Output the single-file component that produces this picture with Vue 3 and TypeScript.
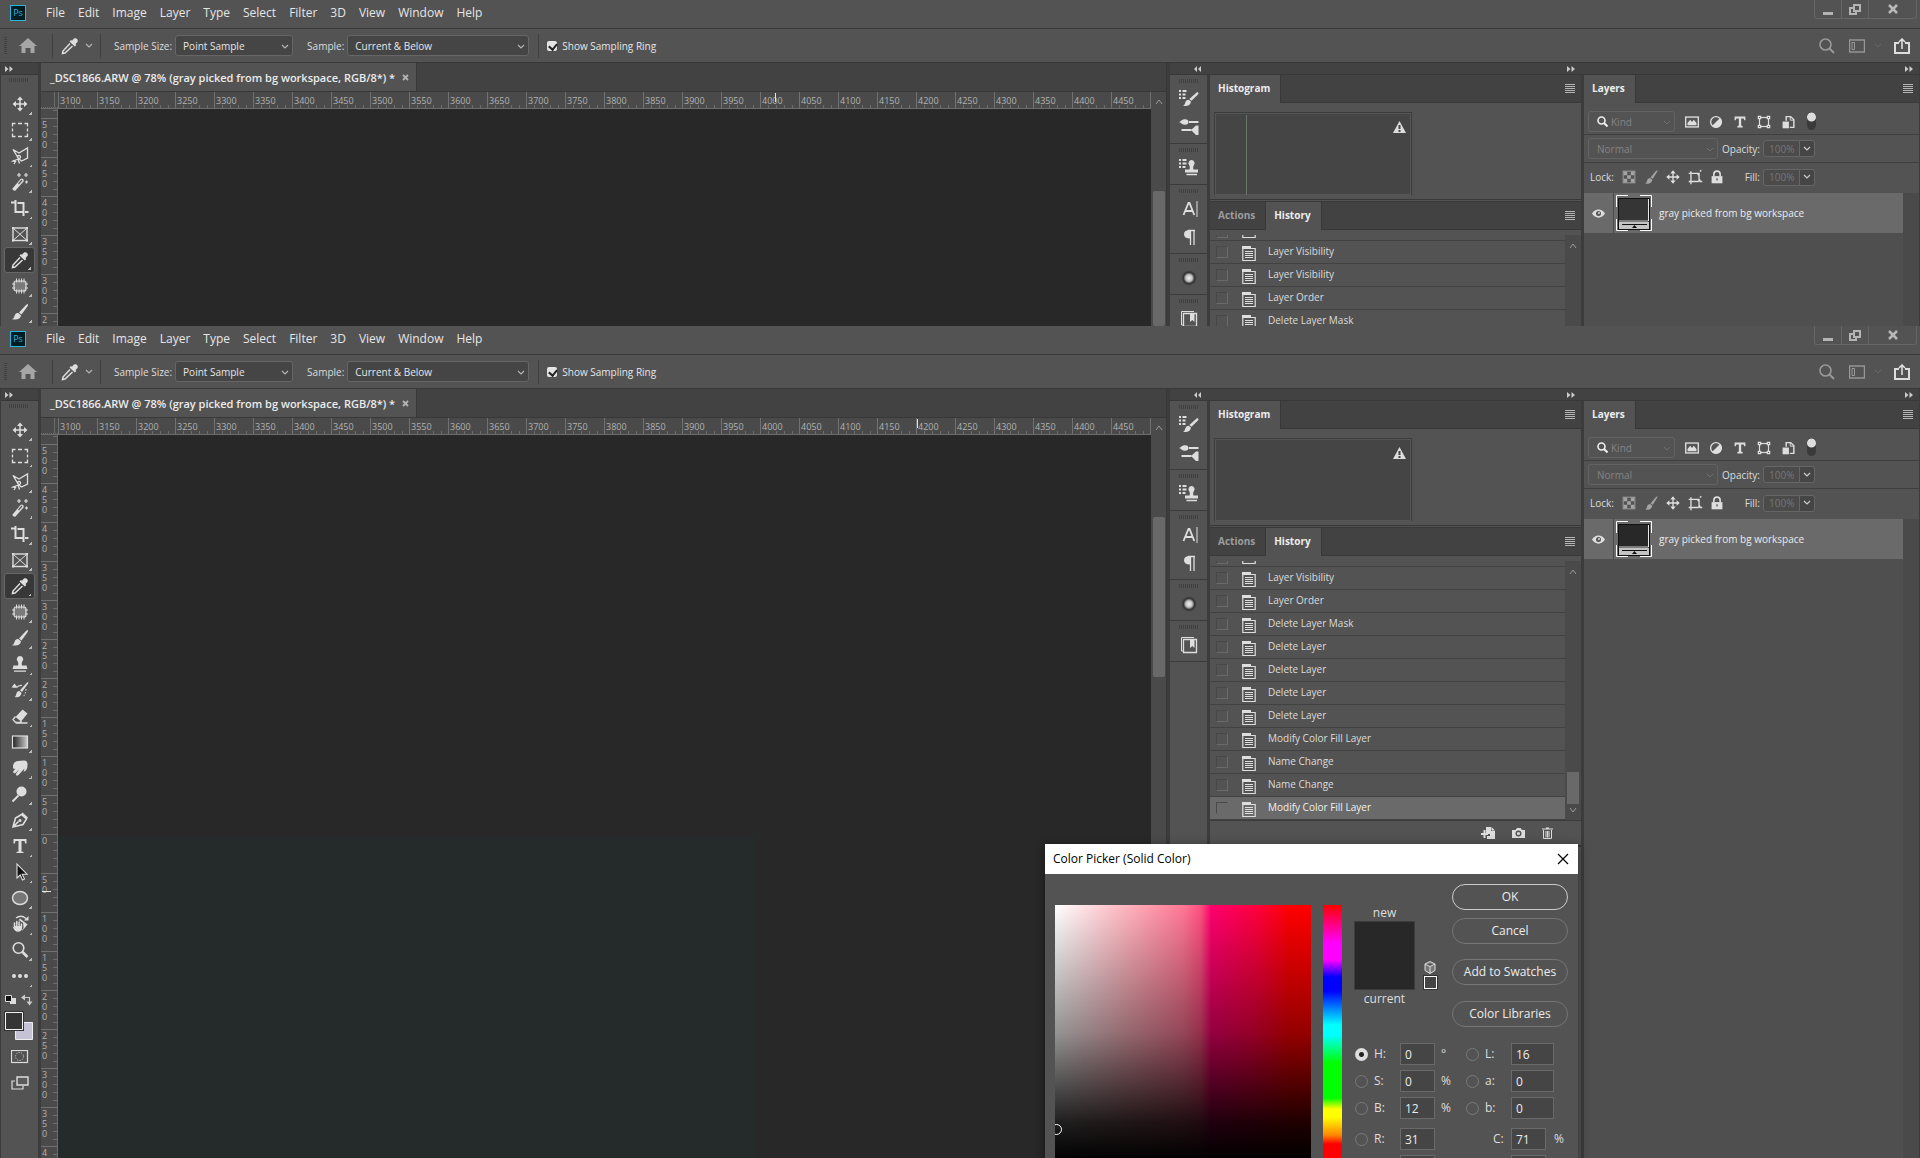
<script setup lang="ts">
import { reactive } from 'vue'

interface Shot {
  id: string
  history: string[]
  selected: number
  thumb: string
  histogramLine: boolean
  markerX: number
  markerY: number
  toolCount: number
  rulerCount: number
  full: boolean
}

const shots: Shot[] = [
  {
    id: 'a',
    history: ['Layer Visibility', 'Layer Visibility', 'Layer Order', 'Delete Layer Mask'],
    selected: -1,
    thumb: '#353535',
    histogramLine: true,
    markerX: 734,
    markerY: 0,
    toolCount: 9,
    rulerCount: 6,
    full: false
  },
  {
    id: 'b',
    history: [
      'Layer Visibility', 'Layer Order', 'Delete Layer Mask', 'Delete Layer', 'Delete Layer', 'Delete Layer',
      'Delete Layer', 'Modify Color Fill Layer', 'Name Change', 'Name Change', 'Modify Color Fill Layer'
    ],
    selected: 10,
    thumb: '#282828',
    histogramLine: false,
    markerX: 876,
    markerY: 456,
    toolCount: 22,
    rulerCount: 19,
    full: true
  }
]

const menus = ['File', 'Edit', 'Image', 'Layer', 'Type', 'Select', 'Filter', '3D', 'View', 'Window', 'Help']
const across = Array.from({ length: 28 }, (_, i) => String(3100 + i * 50))
const down = Array.from({ length: 19 }, (_, i) => String(Math.abs(500 - i * 50)))

const tools = [
  'move', 'marquee', 'lasso', 'wand', 'crop', 'frame', 'dropper', 'patch', 'brush', 'stamp', 'historyBrush',
  'eraser', 'gradient', 'smudge', 'dodge', 'pen', 'type', 'select', 'ellipse', 'rotate', 'zoom', 'dots'
]
const strips = [['brushList', 'brushSettings'], ['stampList'], ['character', 'paragraph'], ['sphere'], ['library']]
const filters = ['fImage', 'fAdjust', 'fType', 'fShape', 'fSmart']
const locks = ['lCheck', 'lBrush', 'move', 'lArtboard', 'lLock']

const icons: Record<string, string> = {
  move: '<path d="M10 4v12M4 10h12" stroke="currentColor" stroke-width="1.5"/><path d="M10 2.500l3 3.500H7zM10 17.500l3-3.500H7zM2.500 10l3.500-3v6zM17.500 10l-3.500-3v6z" fill="currentColor"/>',
  marquee: '<path d="M2.500 6.500v-3h3M8 3.500h4M14.500 3.500h3v3M17.500 8.500v3M17.500 13.500v3h-3M12 16.500H8M5.500 16.500h-3v-3M2.500 11.500v-3" fill="none" stroke="currentColor" stroke-width="1.300"/>',
  lasso: '<path d="M3 3.500l6 3.500 8.500-5v10l-6 3-3-2.500L3 3.500zM8.500 13l-5.500 2 2.500 .500-1.500 2.500M8 13l1.500 4.500M9 12.500a1.500 1.500 0 1 1 .1 0" fill="none" stroke="currentColor" stroke-width="1.300"/>',
  wand: '<path d="M2.500 16.500l8-9.500a2 2 0 0 1 3 2.500l-8 9a2.100 2.100 0 0 1-3-2z" fill="currentColor"/><path d="M8.500 12l3.500-4" stroke="#535353" stroke-width="1.200"/><path d="M9 1v4M7 3h4M16 1v4M14 3h4M16.500 8.500v3M15 10h3" stroke="currentColor" stroke-width="1.200"/>',
  crop: '<path d="M1 4.500h3.500M5.500 2v12h7.500M7.500 5h6v13M15 14h3.500" fill="none" stroke="currentColor" stroke-width="2"/>',
  frame: '<rect x="3" y="4" width="14" height="12.500" fill="none" stroke="currentColor" stroke-width="1.400"/><path d="M3 4l14 12.500M17 4L3 16.500" stroke="currentColor"/><path d="M2 3h2v2H2zM16 3h2v2h-2zM2 15.500h2v2H2zM16 15.500h2v2h-2z" fill="currentColor"/>',
  dropper: '<path d="M13 3.500c2-3 6-.500 4.500 2.500l-2 2 .8 1-1.500 1.500-5.300-5L11 4l1 .800z" fill="currentColor"/><path d="M10 7.500l-7 7.500-.500 2.500 2.500-.500 7.500-7" fill="none" stroke="currentColor" stroke-width="1.500"/>',
  patch: '<rect x="4" y="5" width="12" height="10" rx="2" fill="#7a7a7a" stroke="currentColor" stroke-width="1.200"/><path d="M6.500 2.500v4M9 2.500v4M11.500 2.500v4M14 2.500v4M6.500 13.500v4M9 13.500v4M11.500 13.500v4M14 13.500v4M2 8h3M2 12h3M15 8h3M15 12h3" stroke="currentColor"/>',
  brush: '<path d="M17.500 2c1 .5.500 1.500-.500 3l-5.500 7.500-2.500-2 6-6.500c1-1 1.800-2 2.500-2z" fill="currentColor"/><path d="M8.300 11l2.700 2.200c-.5 4-4 4.800-9 4 2.500-1 2-2.700 3-4.500.7-1.300 2-1.900 3.300-1.700z" fill="currentColor"/>',
  stamp: '<path d="M10 2a3.200 3.200 0 0 1 2.500 5.200c-.8 1-1 2.500-.5 4.300h4.500l1 3.500H2.500l1-3.500H8c.5-1.800.3-3.300-.500-4.300A3.200 3.200 0 0 1 10 2zM4 16.500h12v1.300H4z" fill="currentColor"/>',
  historyBrush: '<path d="M18 2c.8.600 0 2-1 3l-5 7-2-1.700 5.500-6c1-1 1.800-2.300 2.500-2.300zM9.300 11l2.300 2c-.5 3.500-3.500 4.800-7 4 1.700-1 1.300-2.300 2-4 .5-1.300 1.600-2 2.700-2z" fill="currentColor"/><path d="M3 7h4c3-2 4-1.500 5-1.500" fill="none" stroke="currentColor" stroke-width="1.200"/><path d="M1.500 7.500l3-4 3 4z" fill="currentColor"/><path d="M16 9c0 4-1.500 6-3 8" fill="none" stroke="currentColor" stroke-dasharray="1.500 1.500"/>',
  eraser: '<path d="M12.500 3.500l5 4-6.500 8-5.500-4.500z" fill="currentColor"/><path d="M5.500 10.500L3 13.500l2.500 3h4.500l1.500-1.500M6 17h11.500" fill="none" stroke="currentColor" stroke-width="1.300"/>',
  gradient: '<rect x="2.500" y="4" width="15" height="12" fill="url(#grad)" stroke="currentColor" stroke-width="1.200"/>',
  smudge: '<path d="M3 9c0-4 2-5.500 5-6l6-.500c3 0 3.500 2 3.500 4.500 0 4-1.500 6-4 7l1-3.500-6 6.500c-2 1.500-3.500 0-2-2l3-4-4 4c-1.500 1-3-.500-2-2l2-2.500C3.500 11.500 3 10.500 3 9z" fill="currentColor"/>',
  dodge: '<circle cx="11.500" cy="7.500" r="5" fill="currentColor"/><path d="M8.500 11.500l-6 6" stroke="currentColor" stroke-width="2"/>',
  pen: '<path d="M3 17l2.500-9 6-3.500 5 4.500-3.500 5.500L3 17zM12 3l5.500 5M3.500 16.500l5-5" fill="none" stroke="currentColor" stroke-width="1.600"/><circle cx="10" cy="10.500" r="1.500" fill="currentColor"/>',
  type: '<path d="M3.500 3h13v4.500h-1.300l-.7-2.500h-3v10.500l2 .500V17h-7v-1l2-.500V5h-3l-.7 2.500H3.500z" fill="currentColor"/>',
  select: '<path d="M7 2v14l3.200-3 2.300 5 2-1-2.300-4.800H17z" fill="#111" stroke="currentColor" stroke-width="1.100"/>',
  ellipse: '<ellipse cx="10" cy="10" rx="7.500" ry="6.500" fill="#777" stroke="currentColor" stroke-width="1.400"/>',
  rotate: '<path d="M10 4.500l7.500 6-5 6-6-7z" fill="currentColor"/><path d="M6 4c4-3 7-2 10 .500" fill="none" stroke="currentColor" stroke-width="1.300"/><path d="M18.500 2v4.500H14z" fill="currentColor"/><path d="M5 12V8.500M7.200 11V7M9.500 11V8M11.700 12V9.500M3 12l2 4M12 14V12" stroke="#535353" stroke-width="3" stroke-linecap="round"/><path d="M4.500 12.500V9M6.800 11.500V7.500M9.100 11.500V8M11.400 13v-3" stroke="currentColor" stroke-width="1.500" stroke-linecap="round"/><path d="M2.500 12.500l2 1V12h7.600v2c0 2-2 3.800-4 3.800-2.600 0-4-2-5.600-5.300z" fill="currentColor"/>',
  zoom: '<circle cx="8.500" cy="8" r="5.300" fill="none" stroke="currentColor" stroke-width="1.600"/><path d="M12.500 12l5 5" stroke="currentColor" stroke-width="2.600"/>',
  dots: '<circle cx="4" cy="10" r="2" fill="currentColor"/><circle cx="10" cy="10" r="2" fill="currentColor"/><circle cx="16" cy="10" r="2" fill="currentColor"/>',
  brushList: '<path d="M0 1h2v2H0zM3.500 1h4v2h-4zM0 4.500h2v2H0zM3.500 4.500h3v2h-3zM0 8h2v2H0zM3.500 8h3v2h-3z" fill="currentColor"/><path d="M19 3.500c1 .6.500 1.300-.3 2.200l-6.200 6-2.200-1.800 6.200-5.500c1-.8 1.900-1.300 2.500-.900zM9.700 10.800l2.200 1.700c-.5 4-3.500 5-8 4.500 2-1 1.800-2.200 2.600-4 .6-1.300 1.800-2.200 3.200-2.200z" fill="currentColor"/>',
  brushSettings: '<path d="M0 5c2-.3 2.500-2.800 6-2.800 2.500 0 3.500 1.300 3.500 2.800S8.500 7.800 6 7.800C3 7.800 2.500 6 0 5z" fill="currentColor"/><path d="M10 5h9.500M2.500 13h10" stroke="currentColor" stroke-width="2"/><path d="M12 13l5-4.500h2.500v9.500H17z" fill="currentColor"/>',
  stampList: '<path d="M0 1h2v2H0zM3.500 1h4v2h-4zM0 4.500h2v2H0zM3.500 4.500h4v2h-4zM0 8h2v2H0zM3.500 8h3v2h-3z" fill="currentColor"/><path d="M12.500 2a3.200 3.200 0 0 1 2.300 5.300c-.8 1-.8 3-.3 4.200H19v3H6v-3h4.500c.5-1.200.5-3.200-.3-4.200A3.200 3.200 0 0 1 12.500 2zM7.500 15.700h10.500v1.500H7.500z" fill="currentColor"/>',
  character: '<path d="M4.500 16L9.500 4h1l4.800 12M6.300 12h7" fill="none" stroke="currentColor" stroke-width="1.800"/><path d="M18 2v16" stroke="currentColor"/>',
  paragraph: '<path d="M11 3v8.500C7 11.500 5 10 5 7.200S7 3 11 3z" fill="currentColor"/><path d="M9 3.500h7M11.500 3v15M15 3v15" stroke="currentColor" stroke-width="1.300"/>',
  sphere: '<circle cx="10" cy="10" r="8" fill="url(#ball)"/>',
  library: '<path d="M5 16H2.500V2.500H15" fill="none" stroke="currentColor"/><path d="M4.500 4.500h13v13h-13z" fill="none" stroke="currentColor" stroke-width="1.300"/><path d="M11 4.500h4.500V13l-2.200-2-2.300 2z" fill="currentColor"/>',
  doc: '<path d="M0 0h9v3H0z" fill="currentColor"/><path d="M.800 2.500h12.400v12H.800z" fill="none" stroke="currentColor" stroke-width="1.200"/><path d="M3 5.500h8M3 7.500h8M3 9.500h8M3 11.500h8" stroke="currentColor"/>',
  fImage: '<rect x="3" y="4.500" width="14" height="11" fill="none" stroke="currentColor" stroke-width="1.500"/><path d="M5 13.500V11l3-3.500 2 2.500 2-2.500 3 3.500v2.500z" fill="currentColor"/>',
  fAdjust: '<circle cx="10" cy="10" r="6" fill="none" stroke="currentColor" stroke-width="1.500"/><path d="M14.500 5.500L5.500 14.500A6.200 6.200 0 0 0 14.500 5.500z" fill="currentColor"/>',
  fType: '<path d="M4 4h12v4h-1.300L14 6h-2.700v8l1.700.700V16H7v-1.300L8.700 14V6H6l-.7 2H4z" fill="currentColor"/>',
  fShape: '<rect x="5" y="5" width="10" height="10" fill="none" stroke="currentColor" stroke-width="1.300"/><path d="M3 3h4v4H3zM13 3h4v4h-4zM3 13h4v4H3zM13 13h4v4h-4z" fill="currentColor"/><path d="M4.500 4.500h1v1h-1zM14.500 4.500h1v1h-1zM4.500 14.500h1v1h-1zM14.500 14.500h1v1h-1z" fill="#535353"/>',
  fSmart: '<path d="M8 8.500V4h5l3.500 3.500V16H12" fill="none" stroke="currentColor" stroke-width="1.600"/><path d="M12.500 4v4h4" fill="none" stroke="currentColor"/><path d="M4 9.500h7V17H4z" fill="currentColor"/>',
  lCheck: '<rect x="3.500" y="3.500" width="13" height="13" fill="none" stroke="#a4a4a4"/><path d="M4 4h4v4H4zM12 4h4v4h-4zM8 8h4v4H8zM4 12h4v4H4zM12 12h4v4h-4z" fill="#a4a4a4"/>',
  lBrush: '<path d="M17.500 3l-5.500 9-2.500-1.500 5.500-6.500c1-1 2-1.500 2.500-1zM9 11l2.500 2c-1 4-4 5-8 4.500 2-1 1.500-2.500 2.500-4.500.5-1.200 1.800-2 3-2z" fill="#a4a4a4"/>',
  lArtboard: '<path d="M3 6h11.500v9M5.500 3.500V15h8l2.500-2M8 6h4.500l2.500 3M5.500 15v3M15 15h3M15.500 4l1.500-1.500M3 15h2" fill="none" stroke="currentColor" stroke-width="1.500"/>',
  lLock: '<path d="M4 9h12v8H4z" fill="currentColor"/><path d="M6.500 9V7a3.500 3.500 0 0 1 7 0v2" fill="none" stroke="currentColor" stroke-width="1.800"/><path d="M9.300 11.500h1.400v2.500H9.300z" fill="#535353"/>'
}

const picker = reactive({
  mode: 'H',
  rows: [
    { l: 'H', v: '0', u: '°', r: 'L', rv: '16', ru: '', radio: true },
    { l: 'S', v: '0', u: '%', r: 'a', rv: '0', ru: '', radio: true },
    { l: 'B', v: '12', u: '%', r: 'b', rv: '0', ru: '', radio: true },
    { l: 'R', v: '31', u: '', r: 'C', rv: '71', ru: '%', radio: false }
  ]
})
</script>

<template>
  <main class="stack">
    <svg class="defs" width="0" height="0" aria-hidden="true">
      <defs>
        <linearGradient id="grad"><stop offset="0" stop-color="#222" /><stop offset="1" stop-color="#ccc" /></linearGradient>
        <radialGradient id="ball">
          <stop offset="0" stop-color="#eee" /><stop offset=".4" stop-color="#c4c4c4" />
          <stop offset=".7" stop-color="#333" /><stop offset="1" stop-color="#535353" />
        </radialGradient>
      </defs>
    </svg>

    <section v-for="w in shots" :key="w.id" class="win">
      <header class="menubar">
        <span class="ps">Ps</span>
        <nav class="menus"><button v-for="m in menus" :key="m">{{ m }}</button></nav>
        <div class="controls">
          <button aria-label="Minimize"><svg width="10" height="14"><path d="M0 11.500h10" stroke="#b4b4b4" stroke-width="3" /></svg></button>
          <button aria-label="Restore"><svg width="12" height="14"><path d="M5 3h6v6H5zM4 6H1v6h6v-3" fill="none" stroke="#b4b4b4" stroke-width="2" /></svg></button>
          <button aria-label="Close" class="wide"><svg width="10" height="14"><path d="M1 3l8 8M9 3l-8 8" stroke="#b8b8b8" stroke-width="2.500" /></svg></button>
        </div>
      </header>

      <div class="options">
        <i class="vgrip"></i>
        <svg class="home" width="18" height="16"><path d="M9 0l9 8h-2.500v7h-4v-5h-5v5h-4V8H0z" fill="#a6a6a6" /></svg>
        <i class="sep"></i>
        <svg class="drop" width="20" height="20" viewBox="0 0 20 20" v-html="icons.dropper"></svg>
        <svg width="8" height="6"><path d="M1 1l3 3 3-3" fill="none" stroke="#b4b4b4" stroke-width="1.200" /></svg>
        <i class="sep two"></i>
        <label :for="'size' + w.id">Sample Size:</label>
        <span class="pick size">
          <select :id="'size' + w.id"><option>Point Sample</option></select>
          <svg width="8" height="6"><path d="M1 1l3 3 3-3" fill="none" stroke="#b4b4b4" stroke-width="1.200" /></svg>
        </span>
        <label :for="'from' + w.id" class="from">Sample:</label>
        <span class="pick below">
          <select :id="'from' + w.id"><option>Current &amp; Below</option></select>
          <svg width="8" height="6"><path d="M1 1l3 3 3-3" fill="none" stroke="#b4b4b4" stroke-width="1.200" /></svg>
        </span>
        <i class="sep three"></i>
        <label class="ring"><input type="checkbox" checked />Show Sampling Ring</label>
        <div class="right">
          <svg width="16" height="16"><circle cx="6.500" cy="6.500" r="5.500" fill="none" stroke="#999" stroke-width="1.600" /><path d="M10.500 10.500l4.500 4.500" stroke="#999" stroke-width="2" /></svg>
          <svg width="16" height="14"><rect x=".5" y="1" width="15" height="12" fill="none" stroke="#999" stroke-width="1.400" /><path d="M3 3.500h2.500v7H3z" fill="none" stroke="#999" /></svg>
          <svg width="8" height="6"><path d="M1 1l3 3 3-3" fill="none" stroke="#686868" /></svg>
          <svg width="16" height="16"><path d="M5 5H1v10h14V5h-4" fill="none" stroke="#ddd" stroke-width="2" /><path d="M8 11V2M5 4l3-3 3 3" fill="none" stroke="#ddd" stroke-width="1.600" /></svg>
        </div>
      </div>

      <div class="body">
        <aside class="tools">
          <div class="head"><svg width="8" height="6"><path d="M0 0l3.500 3L0 6zM4.500 0L8 3 4.500 6z" fill="#ccc" /></svg></div>
          <i class="grip"></i>
          <button v-for="t in tools.slice(0, w.toolCount)" :key="t" class="tool" :class="{ on: t === 'dropper' }" :aria-label="t">
            <svg width="20" height="20" viewBox="0 0 20 20" v-html="icons[t]"></svg>
            <i class="corner"></i>
          </button>
          <template v-if="w.full">
            <svg class="swatches" width="36" height="58">
              <path d="M10 8h6v6h-6z" fill="#ddd" /><path d="M5.500 5.500h6v6h-6z" fill="#111" stroke="#ddd" />
              <path d="M24 7.500h5.500V12" fill="none" stroke="#ccc" stroke-width="1.200" /><path d="M21 7.500l4-3v6zM29.500 15.500l-3-4h6z" fill="#ccc" />
              <path d="M15.500 32.500h17v17h-17z" fill="#c6c2d6" stroke="#eee" />
              <path d="M4 21h20v20H4z" fill="#333" /><path d="M5.500 22.500h17v17h-17z" fill="#353535" stroke="#f2f2f2" />
            </svg>
            <div class="modes">
              <svg width="18" height="14"><rect x=".5" y=".5" width="16" height="12" fill="none" stroke="#ddd" stroke-width="1.200" /><circle cx="8.500" cy="6.500" r="4" fill="none" stroke="#ddd" stroke-dasharray="1 1.500" /></svg>
              <svg width="18" height="14"><path d="M4 5H1v8h11v-3" fill="none" stroke="#ddd" stroke-width="1.200" /><path d="M6 1h11v8H6z" fill="#5a5a5a" stroke="#ddd" stroke-width="1.400" /></svg>
            </div>
          </template>
        </aside>

        <div class="doc">
          <div class="tabs">
            <div class="tab">
              <span>_DSC1866.ARW @ 78% (gray picked from bg workspace, RGB/8*) *</span>
              <svg width="7" height="7"><path d="M1 1l5 5M6 1L1 6" stroke="#b4b4b4" stroke-width="1.800" /></svg>
            </div>
          </div>
          <div class="view">
            <div class="mid">
              <div class="hruler">
                <i class="origin"></i>
                <span v-for="n in across" :key="n">{{ n }}</span>
                <i class="tail"></i>
                <i class="hmark" :style="{ left: w.markerX + 'px' }"></i>
              </div>
              <div class="plane">
                <div class="vruler">
                  <b></b>
                  <span v-for="(n, i) in down.slice(0, w.rulerCount)" :key="i"><em v-for="(c, j) in n.split('')" :key="j">{{ c }}</em></span>
                  <i v-if="w.markerY" class="vmark" :style="{ top: w.markerY + 'px' }"></i>
                </div>
                <div class="canvas"><div class="photo"></div></div>
              </div>
            </div>
            <div class="vscroll">
              <svg width="8" height="6"><path d="M1 5l3-4 3 4" fill="none" stroke="#999" /></svg>
              <i></i>
            </div>
          </div>
        </div>

        <div class="dock">
          <div class="head dockhead">
            <span class="h1"><svg width="7" height="6"><path d="M3 0L0 3l3 3zM7 0L4 3l3 3z" fill="#ccc" /></svg></span>
            <span class="h2"><svg width="8" height="6"><path d="M0 0l3.500 3L0 6zM4.500 0L8 3 4.500 6z" fill="#ccc" /></svg></span>
            <span class="h3"><svg width="8" height="6"><path d="M0 0l3.500 3L0 6zM4.500 0L8 3 4.500 6z" fill="#ccc" /></svg></span>
          </div>
          <div class="cols">
            <div class="strip">
              <div v-for="(g, i) in strips" :key="i" class="group">
                <i class="grip"></i>
                <button v-for="n in g" :key="n" :aria-label="n"><svg width="20" height="20" viewBox="0 0 20 20" v-html="icons[n]"></svg></button>
              </div>
            </div>

            <div class="panels">
              <div class="ptabs"><b class="active">Histogram</b><i class="burger"></i></div>
              <div class="histo">
                <div class="chart">
                  <i v-if="w.histogramLine"></i>
                  <svg width="13" height="12"><path d="M6.500 0L13 12H0z" fill="#ddd" /><path d="M5.500 4h2v4h-2zM5.500 9h2v2h-2z" fill="#444" /></svg>
                </div>
              </div>
              <div class="ptabs second"><b>Actions</b><b class="active mid-tab">History</b><i class="burger"></i></div>
              <div class="history">
                <div class="rows">
                  <div class="row cut"><i class="box"></i><svg class="ic" width="14" height="15" viewBox="0 0 14 15" v-html="icons.doc"></svg></div>
                  <div v-for="(h, i) in w.history" :key="i" class="row" :class="{ sel: i === w.selected }">
                    <i class="box"></i>
                    <svg class="ic" width="14" height="15" viewBox="0 0 14 15" v-html="icons.doc"></svg>
                    <span>{{ h }}</span>
                  </div>
                </div>
                <div class="hscroll">
                  <svg width="8" height="6"><path d="M1 5l3-4 3 4" fill="none" stroke="#999" /></svg>
                  <template v-if="w.full">
                    <i></i>
                    <svg width="8" height="6"><path d="M1 1l3 4 3-4" fill="none" stroke="#999" /></svg>
                  </template>
                </div>
              </div>
              <template v-if="w.full">
                <div class="foot">
                  <svg width="14" height="12"><path d="M5 0h5v4h4v8H6V9h3V7H5z" fill="#ddd" /><path d="M10.500 0l3.500 3.500h-3.500z" fill="#ddd" /><path d="M3.500 3v8M0 7h7" stroke="#ddd" stroke-width="2" /></svg>
                  <svg width="13" height="10"><path d="M0 2h3.500L5 0h3.500L10 2h3v8H0z" fill="#ddd" /><circle cx="6.500" cy="5.500" r="2.300" fill="none" stroke="#535353" stroke-width="1.400" /></svg>
                  <svg width="11" height="12"><path d="M0 2h11M4 1h3" stroke="#ddd" stroke-width="1.200" /><path d="M1.500 3v8.500h8V3M4 4v6.500M5.500 4v6.500M7 4v6.500" fill="none" stroke="#ddd" /></svg>
                </div>
                <div class="rest"></div>
              </template>
            </div>

            <div class="layers">
              <div class="ptabs"><b class="active">Layers</b><i class="burger far"></i></div>
              <div class="lrow kind">
                <span class="field kindbox">
                  <svg width="11" height="11"><circle cx="4.500" cy="4.500" r="3.500" fill="none" stroke="#eee" stroke-width="1.600" /><path d="M7 7l3.500 3.500" stroke="#eee" stroke-width="2" /></svg>
                  <select aria-label="Filter type"><option>Kind</option></select>
                  <svg class="chev" width="8" height="6"><path d="M1 1l3 3 3-3" fill="none" stroke="#707070" /></svg>
                </span>
                <span class="fset"><svg v-for="f in filters" :key="f" width="18" height="18" viewBox="0 0 20 20" v-html="icons[f]"></svg></span>
                <i class="toggle"></i>
              </div>
              <div class="lrow">
                <span class="field blend">
                  <select aria-label="Blend mode"><option>Normal</option></select>
                  <svg class="chev" width="8" height="6"><path d="M1 1l3 3 3-3" fill="none" stroke="#707070" /></svg>
                </span>
                <label class="amount"><span>Opacity:</span><input value="100%" /><i><svg width="8" height="6"><path d="M1 1l3 3 3-3" fill="none" stroke="#ccc" stroke-width="1.200" /></svg></i></label>
              </div>
              <div class="lrow last">
                <span class="lock">Lock:</span>
                <span class="lset"><svg v-for="f in locks" :key="f" width="18" height="18" viewBox="0 0 20 20" v-html="icons[f]"></svg></span>
                <label class="amount"><span>Fill:</span><input value="100%" /><i><svg width="8" height="6"><path d="M1 1l3 3 3-3" fill="none" stroke="#ccc" stroke-width="1.200" /></svg></i></label>
              </div>
              <div class="list">
                <div class="items">
                  <div class="layer">
                    <span class="eye"><svg width="13" height="9"><path d="M0 4.500C3-1 10-1 13 4.500 10 10 3 10 0 4.500z" fill="#ddd" /><circle cx="6.500" cy="4.500" r="2.500" fill="#555" /><circle cx="7" cy="4" r="1" fill="#ddd" /></svg></span>
                    <svg class="lthumb" width="36" height="36">
                      <path d="M.500 12V.500H12M24 .500h11.500V12M35.500 24v11.500H24M12 35.500H.500V24" fill="none" stroke="#fff" />
                      <path d="M2 3h32v32H2z" fill="#111" /><path d="M3 4h30v21H3z" :fill="w.thumb" />
                      <path d="M32.500 4v22H3" fill="none" stroke="#e8e8e8" />
                      <path d="M3 27h30v7H3z" fill="#c4c4c4" /><path d="M6 29.500h25" stroke="#111" /><path d="M16 33h5l-2.500-3z" fill="#111" />
                    </svg>
                    <span>gray picked from bg workspace</span>
                  </div>
                </div>
                <div class="lscroll"></div>
              </div>
            </div>
          </div>
        </div>
      </div>

      <div v-if="w.full" class="dialog" role="dialog" aria-label="Color Picker">
        <div class="dtitle">
          <span>Color Picker (Solid Color)</span>
          <button aria-label="Close dialog"><svg width="12" height="12"><path d="M1 1l10 10M11 1L1 11" stroke="#000" stroke-width="1.200" /></svg></button>
        </div>
        <div class="dbody">
          <div class="field2d"><i class="spot"></i></div>
          <div class="hue"></div>
          <div class="side">
            <div class="upper">
              <div class="compare"><span>new</span><i></i><span>current</span></div>
              <div class="web">
                <svg width="12" height="13"><path d="M6 .500l5 2.500v6.500L6 12.500 1 9.500V3zM1 3l5 2.500L11 3M6 5.500v7" fill="#777" stroke="#ddd" /></svg>
                <i></i>
              </div>
              <div class="btns">
                <button class="ok">OK</button>
                <button>Cancel</button>
                <button class="gap">Add to Swatches</button>
                <button class="gap2">Color Libraries</button>
              </div>
            </div>
            <div class="values">
              <div v-for="r in picker.rows" :key="r.l" class="vrow" :class="{ split: r.l === 'R' }">
                <label class="vl"><input v-model="picker.mode" type="radio" name="channel" :value="r.l" />{{ r.l }}:</label>
                <input v-model="r.v" class="num" :aria-label="r.l" />
                <span class="unit">{{ r.u }}</span>
                <label v-if="r.radio" class="vl rt"><input v-model="picker.mode" type="radio" name="channel" :value="r.r" />{{ r.r }}:</label>
                <span v-else class="vl rt cmyk">{{ r.r }}:</span>
                <input v-model="r.rv" class="num" :class="{ big: r.radio }" :aria-label="r.r" />
                <span class="unit">{{ r.ru }}</span>
              </div>
              <div class="vrow below-edge">
                <span class="vl"></span><i class="num"></i><span class="unit"></span><span class="vl rt"></span><i class="num"></i>
              </div>
            </div>
          </div>
        </div>
      </div>
    </section>
  </main>
</template>

<style>
html, body { margin: 0; background: #535353; }
</style>

<style scoped>
* { box-sizing: border-box; }
svg { display: block; flex: none; }
i, em { font-style: normal; }
button { border: 0; padding: 0; background: none; color: inherit; font: inherit; display: flex; align-items: center; justify-content: center; }
input, select { font: inherit; color: inherit; margin: 0; }
select { appearance: none; border: 0; background: none; padding: 0; outline: 0; }
.defs { position: absolute; }
.stack { height: 100vh; display: grid; grid-template-rows: 326px 1fr; overflow: hidden; font: 10px/14px "Open Sans", "Noto Sans", sans-serif; color: #dcdcdc; }
.win { position: relative; overflow: hidden; min-height: 0; display: flex; flex-direction: column; background: #535353; }

.menubar { flex: none; height: 28px; display: flex; align-items: flex-start; padding-left: 10px; }
.ps { width: 16px; height: 16px; margin-top: 5px; border: 1px solid #2fb4da; background: #001d26; color: #2fb4da; font-size: 9px; line-height: 13px; text-align: center; }
.menus { display: flex; gap: 13px; margin-left: 20px; height: 26px; font-size: 12px; color: #e6e6e6; }
.controls { margin: 0 3px 0 auto; display: flex; height: 19px; border: 1px solid #666; border-top: 0; border-radius: 0 0 3px 3px; }
.controls button { width: 27px; border-right: 1px solid #666; }
.controls .wide { width: 47px; border: 0; }

.options { flex: none; height: 34px; border-top: 1px solid #383838; display: flex; align-items: center; padding-left: 4px; }
.vgrip { width: 3px; height: 18px; background: repeating-linear-gradient(#404040 0 1px, transparent 1px 2px); }
.home { margin-left: 12px; }
.sep { width: 1px; height: 24px; margin-left: 15px; background: #3f3f3f; }
.drop { margin: 0 5px 0 7px; color: #ddd; }
.sep.two { margin-left: 7px; margin-right: 13px; }
.pick { position: relative; height: 21px; margin-left: 3px; border: 1px solid #666; border-radius: 3px; background: #454545; display: flex; color: #e6e6e6; }
.pick select { width: 100%; padding-left: 7px; }
.pick svg { position: absolute; right: 3px; top: 8px; }
.size { width: 118px; }
.below { width: 182px; }
.from { margin-left: 14px; }
.sep.three { margin: 0 8px 0 9px; }
.ring { display: flex; align-items: center; gap: 5px; color: #e6e6e6; }
.ring input { appearance: none; position: relative; width: 10px; height: 10px; background: #e4e4e4; border-radius: 2px; }
.ring input::after { content: ""; position: absolute; left: 3px; top: 1px; width: 4px; height: 6px; border: solid #222; border-width: 0 2px 2px 0; transform: rotate(40deg); }
.right { margin: 0 10px 0 auto; display: flex; align-items: center; gap: 14px; }
.right svg:nth-child(3) { margin-left: -5px; margin-right: -2px; }

.body { flex: 1; min-height: 0; display: flex; border-top: 1px solid #383838; }
.head { height: 12px; flex: none; background: #424242; border-bottom: 1px solid #383838; display: flex; align-items: center; }
.grip { display: block; height: 4px; width: 20px; background: repeating-linear-gradient(to right, #404040 0 1px, transparent 1px 2px); }

.tools { flex: none; width: 41px; border-left: 1px solid #3c3c3c; border-right: 3px solid #3c3c3c; display: flex; flex-direction: column; overflow: hidden; }
.tools .head { padding-left: 4px; }
.tools > .grip { margin: 3px 0 9px 8px; flex: none; }
.tool { position: relative; flex: none; width: 31px; height: 26px; margin-left: 3px; border-radius: 3px; color: #dedede; }
.tool.on { background: #383838; border: 1px solid #666; }
.corner { position: absolute; right: 3px; bottom: 2px; width: 3px; height: 3px; background: linear-gradient(135deg, transparent 50%, #bbb 50%); }
.swatches { margin: 1px 0 0 -1px; }
.modes { display: flex; flex-direction: column; gap: 12px; margin: 2px 0 0 10px; }

.doc { flex: 1; min-width: 0; display: flex; flex-direction: column; border-right: 1px solid #383838; }
.tabs { flex: none; height: 29px; background: #424242; border-bottom: 1px solid #383838; display: flex; }
.tab { display: flex; align-items: center; gap: 7px; padding: 1px 7px 0 9px; background: #535353; border-right: 1px solid #383838; font-size: 11px; font-weight: 600; color: #ececec; white-space: nowrap; }
.view { flex: 1; min-height: 0; display: flex; }
.mid { flex: 1; min-width: 0; display: flex; flex-direction: column; }
.hruler, .vruler { position: relative; flex: none; overflow: hidden; display: flex; background: #4a4a4a; color: #b2b2b2; font-size: 9px; }
.hruler { height: 17px; border-bottom: 1px solid #6c6c6c; }
.origin { flex: none; width: 17px; background: linear-gradient(#6c6c6c, #6c6c6c) 13px 0 / 1px 100% no-repeat; border-bottom: 1px dotted #6c6c6c; }
.hruler span { flex: none; width: 39px; padding-left: 1px; line-height: 17px; border-left: 1px solid #717171; background: repeating-linear-gradient(to right, transparent 0 7px, #6c6c6c 7px 8px) left bottom / 100% 3px no-repeat; }
.tail { width: 1px; background: #717171; }
.hmark { position: absolute; top: 1px; width: 1px; height: 9px; background: #e4e4e4; }
.plane { flex: 1; min-height: 0; display: flex; }
.vruler { flex-direction: column; width: 17px; border-right: 1px solid #6c6c6c; }
.vruler b { flex: none; height: 9px; background: linear-gradient(#6c6c6c, #6c6c6c) right 1px / 4px 1px no-repeat; }
.vruler span { flex: none; height: 39px; padding: 1px 0 0 1px; border-top: 1px solid #717171; background: repeating-linear-gradient(transparent 0 7px, #6c6c6c 7px 8px) right top / 4px 100% no-repeat; }
.vruler em { display: block; line-height: 10px; }
.vmark { position: absolute; left: 1px; width: 9px; height: 1px; background: #e4e4e4; }
.canvas { flex: 1; background: #282828; overflow: hidden; }
.photo { margin-top: 401px; height: 500px; width: 64%; background: linear-gradient(to right, #252b2b 99%, #282828); }
.vscroll { flex: none; width: 15px; background: #4a4a4a; display: flex; flex-direction: column; align-items: center; padding-top: 7px; }
.vscroll i { width: 12px; height: 160px; margin-top: 86px; background: #696969; border-radius: 2px; }

.dock { flex: none; width: 753px; display: flex; flex-direction: column; border-left: 3px solid #3c3c3c; border-right: 1px solid #3c3c3c; }
.dockhead span { display: flex; justify-content: flex-end; padding-right: 9px; }
.h1 { width: 40px; }
.h2 { width: 374px; }
.dockhead .h3 { flex: 1; padding-right: 6px; }
.cols { flex: 1; min-height: 0; display: flex; }
.strip { flex: none; width: 40px; border-right: 3px solid #3c3c3c; }
.group { border-bottom: 1px solid #3c3c3c; padding: 1px 0 2px; color: #dedede; }
.group .grip { margin: 3px 0 0 9px; }
.group button { width: 37px; height: 28px; }
.group .grip + button { margin-top: 2px; }
.panels { flex: none; width: 374px; border-right: 3px solid #3c3c3c; display: flex; flex-direction: column; min-height: 0; }
.ptabs { flex: none; height: 28px; background: #424242; border-bottom: 1px solid #383838; display: flex; align-items: stretch; color: #9c9c9c; }
.ptabs b { padding: 0 10px 0 8px; line-height: 27px; }
.ptabs .active { background: #535353; color: #ececec; height: 28px; border-right: 1px solid #383838; }
.burger { margin: 9px 6px 0 auto; width: 10px; height: 9px; background: repeating-linear-gradient(#b4b4b4 0 1px, transparent 1px 2px); }
.histo { flex: none; height: 97px; padding: 9px 0 0 4px; border-bottom: 1px solid #383838; }
.chart { position: relative; width: 198px; height: 83px; border: 1px solid #3c3c3c; border-bottom: 0; background: #454545; box-shadow: inset 0 0 0 1px #565656; }
.chart svg { position: absolute; right: 5px; top: 8px; }
.chart i { position: absolute; left: 31px; top: 2px; bottom: 0; width: 1px; background: #6c756c; }
.second { margin-top: 1px; border-top: 1px solid #383838; height: 29px; }
.second .active { border-left: 1px solid #383838; }
.history { flex: none; display: flex; margin-top: 5px; border-bottom: 1px solid #3c3c3c; }
.rows { flex: 1; }
.row { height: 23px; border-bottom: 1px solid #424242; display: flex; align-items: center; padding-left: 6px; overflow: hidden; }
.row.cut { height: 6px; align-items: flex-end; padding-bottom: 2px; }
.row.sel { background: #6a6a6a; color: #f0f0f0; }
.box { width: 12px; height: 12px; border: 1px solid #484848; border-right-color: #6a6a6a; border-bottom-color: #6a6a6a; flex: none; }
.ic { margin: 2px 12px 0 14px; color: #dedede; }
.row.cut .ic { margin-top: 0; }
.row span { line-height: 20px; height: 23px; }
.hscroll { flex: none; width: 16px; background: #4a4a4a; display: flex; flex-direction: column; align-items: center; padding: 8px 0 7px; }
.hscroll i { margin-top: auto; margin-bottom: 3px; width: 12px; height: 32px; background: #696969; }
.foot { flex: none; height: 24px; display: flex; align-items: center; justify-content: flex-end; gap: 17px; padding-right: 28px; }
.rest { flex: 1; border-top: 2px solid #383838; }

.layers { flex: 1; min-width: 0; display: flex; flex-direction: column; }
.far { margin-right: 6px; }
.lrow { flex: none; height: 28px; display: flex; align-items: center; padding-left: 4px; border-bottom: 1px solid #3f3f3f; }
.lrow.kind { height: 32px; padding-top: 6px; }
.lrow.last { height: 30px; border: 0; padding-bottom: 2px; }
.field { position: relative; height: 21px; border: 1px solid #636363; border-radius: 3px; display: flex; align-items: center; color: #848484; }
.kindbox { width: 87px; padding-left: 8px; gap: 3px; }
.blend { width: 130px; padding-left: 8px; }
.field select { flex: 1; }
.chev { position: absolute; right: 3px; top: 8px; }
.fset { display: flex; gap: 6px; margin-left: 8px; color: #dedede; }
.toggle { width: 9px; height: 18px; margin: 0 0 2px 10px; border-radius: 5px; background: radial-gradient(circle at 50% 5px, #ddd 0 4px, #3a3a3a 5px); }
.amount { display: flex; align-items: center; margin-left: auto; margin-right: 104px; height: 17px; color: #dcdcdc; }
.amount span { margin-right: 3px; }
.amount input { width: 37px; height: 17px; border: 1px solid #666; border-radius: 3px 0 0 3px; background: #4b4b4b; color: #767676; padding: 0 0 0 5px; }
.amount i { width: 15px; height: 17px; border: 1px solid #666; border-left: 0; border-radius: 0 3px 3px 0; background: #454545; display: flex; align-items: center; justify-content: center; }
.lock { margin-left: 2px; width: 30px; }
.lset { display: flex; gap: 4px; color: #dedede; }
.list { flex: 1; min-height: 0; display: flex; background: #4f4f4f; }
.items { flex: 1; }
.lscroll { width: 16px; background: #4a4a4a; }
.layer { height: 40px; background: #6a6a6a; display: flex; align-items: center; color: #ececec; }
.eye { width: 30px; height: 40px; border-right: 1px solid #4a4a4a; display: flex; align-items: center; justify-content: center; }
.lthumb { margin: 0 7px 0 2px; }

.dialog { position: absolute; right: 342px; top: 518px; width: 533px; height: 400px; background: #535353; box-shadow: 0 2px 10px rgba(0, 0, 0, .45); font-size: 12px; line-height: 16px; color: #dedede; }
.dtitle { height: 30px; background: #fff; color: #000; display: flex; align-items: center; justify-content: space-between; padding: 0 9px 0 8px; }
.dbody { display: flex; padding-left: 10px; }
.field2d { position: relative; flex: none; width: 256px; height: 256px; margin-top: 31px; overflow: hidden; background: linear-gradient(transparent, rgba(0, 0, 0, .42) 50%, rgba(0, 0, 0, .88) 85%, #000), linear-gradient(to right, #fff, #ffb4be 28%, #ff7896 50%, #ff5080 57%, #ff006e 61%, #ff0040 78%, #f00 92%); }
.spot { position: absolute; left: -4px; top: 219px; width: 11px; height: 11px; border: 1px solid #fff; border-radius: 50%; }
.hue { flex: none; width: 19px; height: 256px; margin: 31px 0 0 12px; background: linear-gradient(red, #f0f 38px, #f0f 55px, #00f 72px, #00f 86px, #0ff 120px, #0ff 130px, #0f0 158px, #0f0 193px, #ff0 204px, #ff0 212px, #f80 230px, red 239px); }
.side { flex: none; margin-left: 12px; width: 220px; }
.upper { display: flex; }
.compare { width: 61px; margin-top: 31px; display: flex; flex-direction: column; align-items: center; }
.compare i { width: 61px; height: 69px; background: #282828; border: 1px solid #3c3c3c; }
.compare i + span { margin-top: 1px; }
.web { margin: 87px 0 0 9px; width: 13px; }
.web i { display: block; width: 13px; height: 13px; margin-top: 2px; border: 1px solid #fff; outline: 1px solid #333; background: #444; }
.btns { margin: 10px 0 0 15px; width: 116px; }
.btns button { width: 116px; height: 26px; border: 1px solid #757575; border-radius: 13px; margin-top: 8px; color: #ececec; }
.btns .ok { margin: 0; border: 1px solid #ccc; }
.btns .gap { margin-top: 15px; }
.btns .gap2 { margin-top: 16px; }
.values { margin-top: 16px; padding-left: 1px; }
.vrow { display: flex; align-items: center; height: 22px; margin-bottom: 5px; }
.vrow.split { margin-top: 9px; }
.vl { flex: none; display: flex; align-items: center; gap: 6px; width: 45px; }
.vl input { appearance: none; width: 13px; height: 13px; border: 1px solid #7a7a7a; border-radius: 50%; }
.vl input:checked { border: 0; background: radial-gradient(circle, #222 0 2px, #ddd 3px); }
.num { flex: none; width: 35px; height: 22px; border: 1px solid #6a6a6a; background: #454545; color: #ececec; padding: 0 0 0 4px; }
.num.big { width: 43px; }
.unit { flex: none; width: 31px; padding-left: 6px; }
.unit:last-child { width: 19px; padding-left: 8px; }
.cmyk { padding-left: 27px; }
</style>
